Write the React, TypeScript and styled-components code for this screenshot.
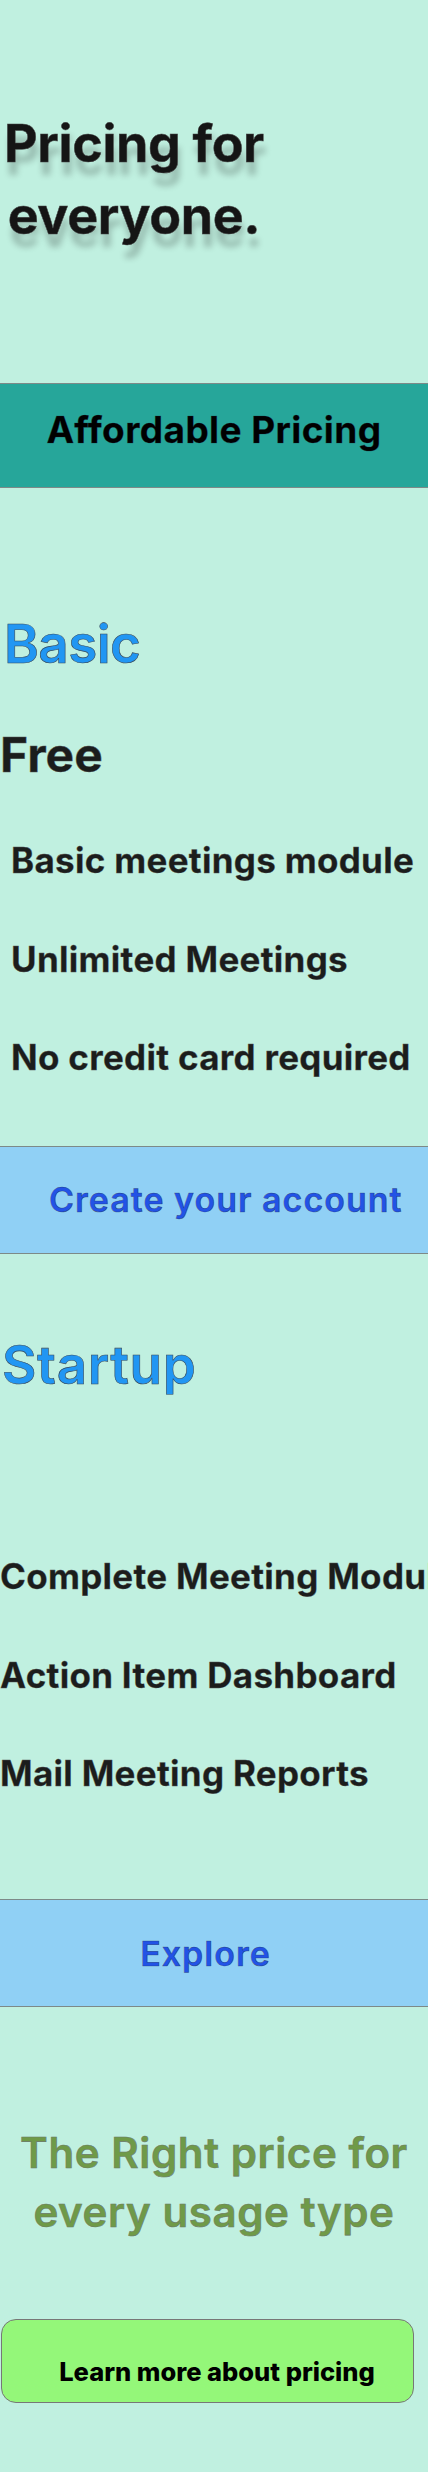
import React from "react";
import styled, { createGlobalStyle } from "styled-components";

const Global = createGlobalStyle`
  html, body { margin: 0; padding: 0; }
  body {
    background: #c0f0e0;
    font-family: Inter, "Noto Sans", sans-serif;
    color: #1b1b1b;
  }
`;

const Page = styled.main`
  width: 428px;
  min-height: 2472px;
  background: #c0f0e0;
  overflow: hidden;
  display: flex;
  flex-direction: column;
`;

const Title = styled.h1`
  margin: 108px 0 0 0;
  align-self: flex-start;
  width: 268px;
  text-align: center;
  font-size: 52px;
  line-height: 72px;
  font-weight: 700;
  letter-spacing: -0.4px;
  color: #151515;
  -webkit-text-stroke: 0.5px #444;
  text-shadow: 2px 13px 6px rgba(0, 0, 0, 0.22);
`;

const Band = styled.div<{ $bg: string; $top: number; $h: number; $pt: number }>`
  box-sizing: border-box;
  margin-top: ${(p) => p.$top}px;
  height: ${(p) => p.$h}px;
  padding-top: ${(p) => p.$pt}px;
  background: ${(p) => p.$bg};
  border-top: 1px solid #7d8a88;
  border-bottom: 1px solid #7d8a88;
`;

const BandText = styled.div<{
  $size: number;
  $color: string;
  $align: string;
  $weight: number;
  $ls: number;
  $pl?: number;
  $pr?: number;
}>`
  font-size: ${(p) => p.$size}px;
  line-height: 44px;
  font-weight: ${(p) => p.$weight};
  letter-spacing: ${(p) => p.$ls}px;
  color: ${(p) => p.$color};
  text-align: ${(p) => p.$align};
  padding-left: ${(p) => p.$pl ?? 0}px;
  padding-right: ${(p) => p.$pr ?? 0}px;
  white-space: nowrap;
  -webkit-text-stroke: 0.5px rgba(30, 40, 60, 0.6);
`;

const PlanName = styled.h2<{ $top: number; $pl: number; $ls: number }>`
  margin: ${(p) => p.$top}px 0 0 0;
  padding-left: ${(p) => p.$pl}px;
  font-size: 53px;
  line-height: 60px;
  font-weight: 600;
  color: #2196f3;
  letter-spacing: ${(p) => p.$ls}px;
  -webkit-text-stroke: 0.6px #3a4a5a;
`;

const Price = styled.div`
  margin-top: 51px;
  font-size: 48px;
  line-height: 60px;
  font-weight: 700;
  color: #1b1d1c;
  -webkit-text-stroke: 0.4px #555;
`;

const Features = styled.ul<{ $top: number; $pl: number }>`
  list-style: none;
  margin: ${(p) => p.$top}px 0 0 0;
  padding: 0 0 0 ${(p) => p.$pl}px;
  display: flex;
  flex-direction: column;
  gap: 48.5px;
`;

const Feature = styled.li`
  font-size: 35px;
  line-height: 50px;
  font-weight: 700;
  color: #1b1d1c;
  white-space: nowrap;
  letter-spacing: 0.3px;
  -webkit-text-stroke: 0.3px #555;
`;

const Tagline = styled.h3`
  margin: 116px 0 0 0;
  font-size: 42px;
  line-height: 59px;
  font-weight: 600;
  letter-spacing: 0.6px;
  text-align: center;
  color: #6f9a48;
  -webkit-text-stroke: 0.6px #6b7a6a;
`;

const LearnButton = styled.button`
  box-sizing: border-box;
  margin: 78px 0 69px 1px;
  width: 413px;
  height: 84px;
  padding: 22px 0 0 19px;
  align-self: flex-start;
  background: #94f779;
  border: 1px solid #777;
  border-radius: 15px;
  font-family: inherit;
  font-size: 25.5px;
  line-height: 36px;
  font-weight: 800;
  color: #000;
  text-align: center;
  cursor: pointer;
  display: block;
`;

export default function App() {
  return (
    <>
      <Global />
      <Page>
        <Title>Pricing for everyone.</Title>

        <Band $bg="#26a69a" $top={131} $h={105} $pt={24}>
          <BandText $size={37} $weight={700} $ls={0.4} $color="#000" $align="center">
            Affordable Pricing
          </BandText>
        </Band>

        <PlanName $top={126} $pl={4} $ls={-0.6}>Basic</PlanName>
        <Price>Free</Price>
        <Features $top={50} $pl={11}>
          <Feature>Basic meetings module</Feature>
          <Feature>Unlimited Meetings</Feature>
          <Feature>No credit card required</Feature>
        </Features>

        <Band $bg="#90d0f5" $top={64} $h={108} $pt={31}>
          <BandText $size={34} $weight={600} $ls={1} $color="#2253e6" $align="left" $pl={49}>
            Create your account
          </BandText>
        </Band>

        <PlanName $top={81} $pl={2} $ls={0.6}>Startup</PlanName>
        <Features $top={156} $pl={0}>
          <Feature>Complete Meeting Module</Feature>
          <Feature>Action Item Dashboard</Feature>
          <Feature>Mail Meeting Reports</Feature>
        </Features>

        <Band $bg="#90d0f5" $top={101} $h={108} $pt={32}>
          <BandText $size={34} $weight={600} $ls={1} $color="#2253e6" $align="center" $pr={17}>
            Explore
          </BandText>
        </Band>

        <Tagline>
          The Right price for
          <br />
          every usage type
        </Tagline>

        <LearnButton>Learn more about pricing</LearnButton>
      </Page>
    </>
  );
}
